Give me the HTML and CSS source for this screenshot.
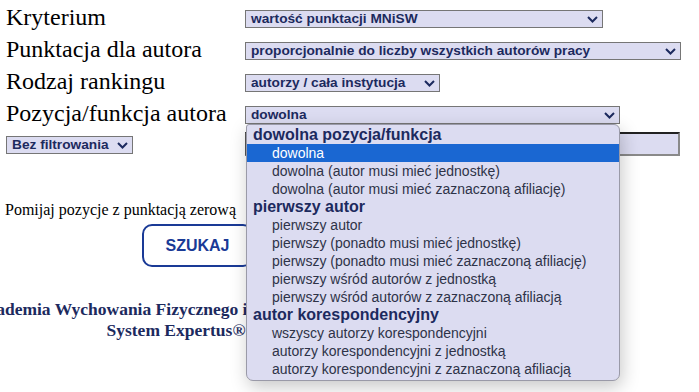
FILE: index.html
```html
<!DOCTYPE html>
<html lang="pl">
<head>
<meta charset="utf-8">
<title>Ranking</title>
<link rel="stylesheet" href="styles.css">
</head>
<body>
<div class="page">
  <div class="form">
    <div class="row">
      <div class="label">Kryterium</div>
      <div class="sel w-kryt"><span>wartość punktacji MNiSW</span><svg class="chev" width="11" height="7" viewBox="0 0 11 7"><path d="M1 1l4.5 4.5L10 1" fill="none" stroke="#1c2a5e" stroke-width="2"/></svg></div>
    </div>
    <div class="row">
      <div class="label">Punktacja dla autora</div>
      <div class="sel w-punkt"><span>proporcjonalnie do liczby wszystkich autorów pracy</span><svg class="chev" width="11" height="7" viewBox="0 0 11 7"><path d="M1 1l4.5 4.5L10 1" fill="none" stroke="#1c2a5e" stroke-width="2"/></svg></div>
    </div>
    <div class="row">
      <div class="label">Rodzaj rankingu</div>
      <div class="sel w-rodz"><span>autorzy / cała instytucja</span><svg class="chev" width="11" height="7" viewBox="0 0 11 7"><path d="M1 1l4.5 4.5L10 1" fill="none" stroke="#1c2a5e" stroke-width="2"/></svg></div>
    </div>
    <div class="row">
      <div class="label">Pozycja/funkcja autora</div>
      <div class="sel w-poz"><span>dowolna</span><svg class="chev" width="11" height="7" viewBox="0 0 11 7"><path d="M1 1l4.5 4.5L10 1" fill="none" stroke="#1c2a5e" stroke-width="2"/></svg></div>
    </div>
    <div class="row row-filter">
      <div class="filter-cell">
        <div class="sel w-filter"><span>Bez filtrowania</span><svg class="chev" width="11" height="7" viewBox="0 0 11 7"><path d="M1 1l4.5 4.5L10 1" fill="none" stroke="#1c2a5e" stroke-width="2"/></svg></div>
      </div>
      <div class="text-input"></div>
    </div>
  </div>

  <div class="skip">Pomijaj pozycje z punktacją zerową</div>

  <div class="btn-row"><div class="btn">SZUKAJ</div></div>

  <div class="footer">
    <div class="f-line">Akademia Wychowania Fizycznego im. J. Kukuczki w</div>
    <div class="f-line">System Expertus®</div>
  </div>

  <div class="popup">
    <div class="grp">dowolna pozycja/funkcja</div>
    <div class="opt selected">dowolna</div>
    <div class="opt">dowolna (autor musi mieć jednostkę)</div>
    <div class="opt">dowolna (autor musi mieć zaznaczoną afiliację)</div>
    <div class="grp">pierwszy autor</div>
    <div class="opt">pierwszy autor</div>
    <div class="opt">pierwszy (ponadto musi mieć jednostkę)</div>
    <div class="opt">pierwszy (ponadto musi mieć zaznaczoną afiliację)</div>
    <div class="opt">pierwszy wśród autorów z jednostką</div>
    <div class="opt">pierwszy wśród autorów z zaznaczoną afiliacją</div>
    <div class="grp">autor korespondencyjny</div>
    <div class="opt">wszyscy autorzy korespondencyjni</div>
    <div class="opt">autorzy korespondencyjni z jednostką</div>
    <div class="opt">autorzy korespondencyjni z zaznaczoną afiliacją</div>
  </div>
</div>
</body>
</html>
```
FILE: styles.css
```css
html, body {
  margin: 0;
  padding: 0;
  background: #ffffff;
  overflow: hidden;
}

.page {
  position: relative;
  width: 699px;
  height: 392px;
  font-family: "Liberation Serif", "Times New Roman", serif;
  color: #000;
}

.form {
  padding: 3px 0 0 6px;
  display: flex;
  flex-direction: column;
}

.row {
  display: flex;
  align-items: flex-start;
  height: 32px;
}

.label {
  width: 239px;
  font-size: 24px;
  line-height: 28px;
  white-space: nowrap;
}

.sel {
  box-sizing: border-box;
  height: 18px;
  margin-top: 7px;
  border: 1px solid #767676;
  background: #dcdcf1;
  color: #1c2a5e;
  font-family: "Liberation Sans", Arial, sans-serif;
  font-weight: bold;
  font-size: 13.7px;
  line-height: 16px;
  padding: 0 4px 0 5px;
  display: flex;
  align-items: center;
  justify-content: space-between;
  white-space: nowrap;
}

.chev {
  flex: none;
  margin-left: 8px;
}

.w-kryt { width: 358px; }
.w-punkt { width: 436px; }
.w-rodz { width: 195px; }
.w-poz { width: 375px; }
.w-filter { width: 127px; margin-top: 5px; }

.row-filter {
  height: 26px;
}

.filter-cell {
  width: 239px;
}

.text-input {
  box-sizing: border-box;
  width: 435px;
  height: 24px;
  margin-top: 1px;
  background: #dcdcf1;
  border: 2px solid;
  border-color: #222 #8a8a8a #8a8a8a #555;
}

.skip {
  margin: 44px 0 0 5px;
  font-size: 16px;
  line-height: 18px;
  white-space: nowrap;
}

.btn-row {
  display: flex;
  padding-left: 142px;
  margin-top: 5px;
}

.btn {
  box-sizing: border-box;
  width: 111px;
  height: 43px;
  border: 2px solid #1a3a96;
  border-radius: 10px;
  color: #1a3a96;
  font-family: "Liberation Sans", Arial, sans-serif;
  font-weight: bold;
  font-size: 16px;
  display: flex;
  align-items: center;
  justify-content: center;
}

.footer {
  width: 352px;
  margin-top: 32px;
  display: flex;
  flex-direction: column;
  align-items: center;
  color: #1c2a5e;
  font-weight: bold;
  font-size: 17.5px;
  line-height: 21px;
}

.f-line {
  white-space: nowrap;
}

.popup {
  position: absolute;
  left: 246px;
  top: 124px;
  width: 374px;
  height: 257px;
  box-sizing: border-box;
  padding-top: 1px;
  background: #dcdcf1;
  border: 1px solid #9a9aa8;
  border-radius: 3px 6px 7px 7px;
  box-shadow: 2px 6px 18px rgba(0, 0, 0, 0.22);
  font-family: "Liberation Sans", Arial, sans-serif;
  overflow: hidden;
}

.grp {
  height: 18px;
  line-height: 18px;
  padding-left: 6px;
  font-weight: bold;
  font-size: 16px;
  color: #1c2a5e;
  white-space: nowrap;
}

.opt {
  height: 18px;
  line-height: 18px;
  padding-left: 25px;
  font-size: 14px;
  color: #2e3348;
  white-space: nowrap;
}

.opt.selected {
  background: #1a67d2;
  color: #ffffff;
}
```
